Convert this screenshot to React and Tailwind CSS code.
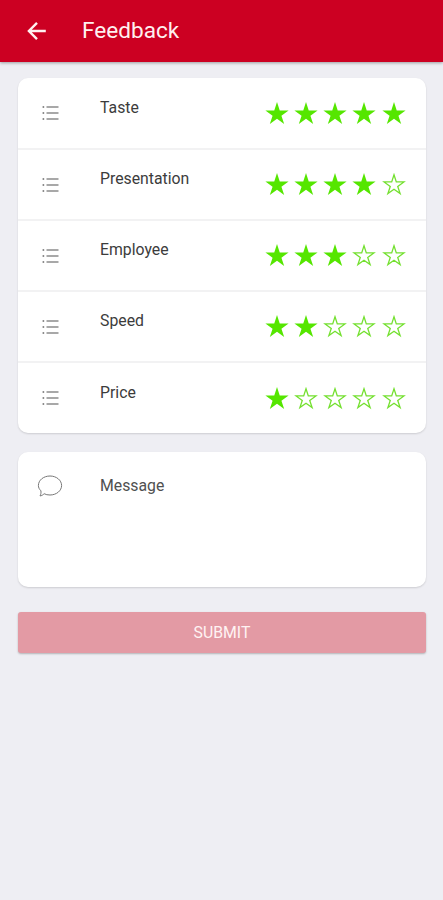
const ratings = [
    { label: 'Taste', value: 5 },
    { label: 'Presentation', value: 4 },
    { label: 'Employee', value: 3 },
    { label: 'Speed', value: 2 },
    { label: 'Price', value: 1 },
];

const Star = ({ filled }) => (
    <svg viewBox="0 0 24 23" className="w-6 h-[23px]" fill={filled ? '#55e600' : 'none'} stroke="#74e030" strokeWidth={filled ? 0 : 1.3} strokeLinejoin="miter">
        {filled ? (
            <path d="M12 0 14.74 8.43H23.6L16.43 13.64 19.17 22.07 12 16.86 4.83 22.07 7.57 13.64.4 8.43H9.26Z" />
        ) : (
            <path d="M12 1.8 14.3 8.95H21.9L15.75 13.4 18.1 20.6 12 16.2 5.9 20.6 8.25 13.4 2.1 8.95H9.7Z" />
        )}
    </svg>
);

const ListIcon = () => (
    <svg viewBox="0 0 18 16" className="w-[18px] h-4" fill="none">
        <path d="M.6 2h1.6M.6 8h1.6M.6 14h1.6" stroke="#666" strokeWidth="1.6" />
        <path d="M4.5 2h12M4.5 8h12M4.5 14h12" stroke="#8c8c8c" strokeWidth="1.4" />
    </svg>
);

const ChatIcon = () => (
    <svg viewBox="0 0 26 22" className="w-[26px] h-[22px]" fill="none" stroke="#777" strokeWidth="1">
        <path d="M3.9 15.8C2.3 14.2 1.4 12.5 1.4 10.5 1.4 5.2 6.5 1 13 1s11.6 4.3 11.6 9.5S19.5 20 13 20c-2.3 0-4.2-.4-5.9-1.3-1.1 1.2-2.4 2.1-4.1 2.2.9-1.4 1.2-3.4.9-5.1Z" />
    </svg>
);

const App = () => {
    return (
        <div className="min-h-screen bg-[#eeeef3] font-['Roboto',sans-serif]">
            <header className="h-[62px] bg-[#cc0022] flex items-center pl-[27px] shadow-[0_1px_3px_rgba(0,0,0,0.35)]">
                <svg viewBox="0 0 20 20" className="w-5 h-5" fill="none" stroke="#fff0f0" strokeWidth="2.4">
                    <path d="M18.8 10H2.5M10 1.8 1.9 10l8.1 8.2" />
                </svg>
                <h1 className="ml-[35px] text-[22.6px] leading-none text-[#fff0f0]">Feedback</h1>
            </header>

            <main className="pt-4 pl-[18px] pr-[17px]">
                {/* Ratings */}
                <ul className="h-[355px] bg-white rounded-[10px] grid grid-rows-[72px_71px_71px_71px_70px] shadow-[0_1px_2px_rgba(0,0,0,0.14)]">
                    {ratings.map(({ label, value }) => (
                        <li key={label} className="flex items-center pl-6 pr-5 border-b-2 border-[#f2f2f3] last:border-b-0">
                            <ListIcon />
                            <span className="ml-[40px] -mt-[11px] text-[15.8px] leading-5 text-[#3c3c3c]">{label}</span>
                            <div className="ml-auto flex gap-[5.2px] mr-[.5px]">
                                {[1, 2, 3, 4, 5].map((n) => (
                                    <Star key={n} filled={n <= value} />
                                ))}
                            </div>
                        </li>
                    ))}
                </ul>

                {/* Message */}
                <div className="mt-[19px] h-[135px] bg-white rounded-[10px] flex items-start pt-[23px] pl-[19px] shadow-[0_1px_2px_rgba(0,0,0,0.14)]">
                    <ChatIcon />
                    <span className="ml-[37px] mt-px text-[15.8px] leading-5 text-[#505050]">Message</span>
                </div>

                <button className="mt-[25px] w-full h-[41px] rounded-[3px] bg-[#e39aa4] text-[#fff3f3] text-[15.8px] shadow-[0_1px_2px_rgba(0,0,0,0.25)]">
                    SUBMIT
                </button>
            </main>
        </div>
    );
};

export default App;
